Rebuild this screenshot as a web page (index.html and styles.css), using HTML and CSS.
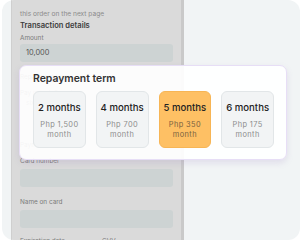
FILE: index.html
```html
<!DOCTYPE html>
<html lang="en">
<head>
  <meta charset="UTF-8" />
  <meta name="viewport" content="width=device-width, initial-scale=1.0"/>
  <title>Repayment term</title>
  <link rel="stylesheet" href="styles.css">
</head>
<body>

  <div class="stage">
    <div class="phone">
      <p class="note">this order on the next page</p>
      <h4>Transaction details</h4>
      <label class="first">Amount</label>
      <div class="field">10,000</div>
      <label>Repayment term</label>
      <label class="tight">Pay in installments</label>
      <p class="note small">six months</p>
      <label class="spaced">Payment method</label>
      <label class="tight">Card number</label>
      <div class="field"></div>
      <label>Name on card</label>
      <div class="field"></div>
      <div class="row">
        <label>Expiration date</label>
        <label>CVV</label>
      </div>
    </div>

    <div class="term-card">
      <h3>Repayment term</h3>
      <div class="options">
        <div class="option">
          <strong>2 months</strong>
          <span>Php 1,500<br>month</span>
        </div>
        <div class="option">
          <strong>4 months</strong>
          <span>Php 700<br>month</span>
        </div>
        <div class="option selected">
          <strong>5 months</strong>
          <span>Php 350<br>month</span>
        </div>
        <div class="option">
          <strong>6 months</strong>
          <span>Php 175<br>month</span>
        </div>
      </div>
    </div>
  </div>

</body>
</html>
```

FILE: styles.css
```css
body {
  margin: 0;
  width: 302px;
  height: 240px;
  overflow: hidden;
  background-color: #ffffff;
  font-family: Inter, "Noto Sans", sans-serif;
}

.stage {
  position: relative;
  margin-left: 2px;
  width: 298px;
  height: 240px;
  background-color: #f1f4f5;
  border-radius: 12px;
  overflow: hidden;
}

.phone {
  margin-left: 9px;
  width: 161px;
  height: 240px;
  padding: 9px 0 0 8px;
  box-sizing: content-box;
  background-color: #dadada;
  border-left: 1px solid #cfcfcf;
  border-right: 3px solid #c9c9c9;
  overflow: hidden;
}

.note {
  margin: 0;
  font-size: 6.6px;
  line-height: 10px;
  color: #8a8a8a;
}

.note.small {
  padding-left: 6px;
}

h4 {
  margin: 2px 0 0;
  font-size: 7.6px;
  line-height: 10px;
  font-weight: 600;
  color: #3c3c3c;
}

label {
  display: block;
  margin-top: 10px;
  font-size: 6.4px;
  line-height: 10px;
  color: #7a7a7a;
}

label.first {
  margin-top: 2px;
}

label.tight {
  margin-top: 6px;
}

label.spaced {
  margin-top: 32px;
}

.field {
  margin-top: 3px;
  width: 153px;
  height: 18px;
  border-radius: 3px;
  background-color: #cdd3d3;
  font-size: 7.4px;
  line-height: 18px;
  color: #555;
  padding-left: 6px;
  box-sizing: border-box;
}

label.first + .field {
  margin-top: 1px;
}

.row {
  display: flex;
  gap: 37px;
}

.row label {
  margin-top: 8px;
}

.term-card {
  position: absolute;
  left: 17px;
  top: 65px;
  width: 268px;
  height: 95px;
  box-sizing: border-box;
  padding: 6px 12px 0 13px;
  background-color: rgba(255, 255, 255, 0.92);
  border: 1px solid #e7def6;
  border-radius: 7px;
  box-shadow: 0 3px 6px rgba(150, 120, 190, 0.18);
}

h3 {
  margin: 0;
  font-size: 10.4px;
  line-height: 14px;
  font-weight: 600;
  color: #333;
}

.options {
  display: flex;
  gap: 10px;
  margin-top: 5px;
}

.option {
  width: 54px;
  height: 57px;
  box-sizing: border-box;
  border: 1px solid #e2e6e8;
  border-radius: 6px;
  background-color: #f2f4f5;
  text-align: center;
  padding-top: 10px;
}

.option strong {
  display: block;
  font-size: 9.6px;
  line-height: 12px;
  font-weight: 500;
  color: #222;
}

.option span {
  display: block;
  margin-top: 6px;
  font-size: 7.4px;
  line-height: 10px;
  letter-spacing: 0.4px;
  color: #8c8c8c;
}

.option.selected {
  background-color: #fec064;
  border-color: #f7b555;
}

.option.selected span {
  color: #7a6240;
}
```
